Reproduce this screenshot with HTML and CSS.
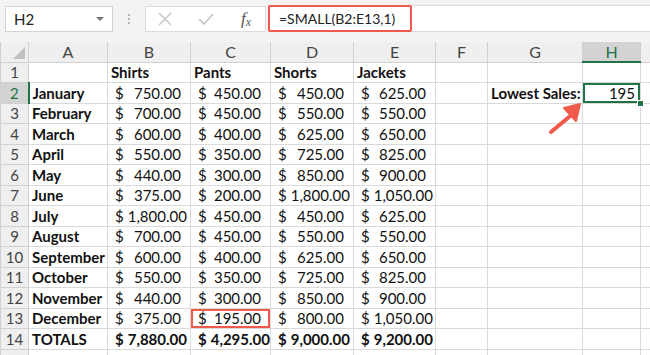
FILE: index.html
```html
<!DOCTYPE html>
<html>
<head>
    <title>SMALL function</title>
    <link rel="stylesheet" href="styles.css">
</head>
<body>
<div class="toolbar">
    <div class="namebox">
        <span>H2</span>
        <span class="caret"></span>
    </div>
    <div class="grip"><i></i><i></i><i></i></div>
    <div class="funcs">
        <svg width="14" height="14" viewBox="0 0 14 14"><path d="M1 1 L13 13 M13 1 L1 13" stroke="#c8c8c8" stroke-width="1.6" fill="none"/></svg>
        <svg width="16" height="14" viewBox="0 0 16 14"><path d="M1 7 L6 12 L15 2" stroke="#c8c8c8" stroke-width="1.8" fill="none"/></svg>
        <span class="fx">f<sub>x</sub></span>
    </div>
    <div class="formula">
        <span class="hl">=SMALL(B2:E13,1)</span>
    </div>
</div>
<div class="sheet">
    <table>
        <colgroup>
            <col style="width:28px"><col style="width:79px"><col style="width:83px"><col style="width:80px">
            <col style="width:83px"><col style="width:82px"><col style="width:52px"><col style="width:95px">
            <col style="width:58px"><col style="width:10px">
        </colgroup>
        <tr class="head">
            <th class="corner"><span class="tri"></span></th>
            <th>A</th><th>B</th><th>C</th><th>D</th><th>E</th><th>F</th><th>G</th><th class="sel">H</th><th></th>
        </tr>
        <tr>
            <th>1</th><td></td>
            <td class="b">Shirts</td><td class="b">Pants</td><td class="b">Shorts</td><td class="b">Jackets</td>
            <td></td><td></td><td></td><td></td>
        </tr>
        <tr>
            <th class="sel">2</th><td class="b">January</td>
            <td><div class="acc"><span>$</span><span>750.00</span></div></td>
            <td><div class="acc"><span>$</span><span>450.00</span></div></td>
            <td><div class="acc"><span>$</span><span>450.00</span></div></td>
            <td><div class="acc"><span>$</span><span>625.00</span></div></td>
            <td></td><td class="b r">Lowest Sales:</td><td class="active">195<span class="handle"></span></td><td></td>
        </tr>
        <tr>
            <th>3</th><td class="b">February</td>
            <td><div class="acc"><span>$</span><span>700.00</span></div></td>
            <td><div class="acc"><span>$</span><span>450.00</span></div></td>
            <td><div class="acc"><span>$</span><span>550.00</span></div></td>
            <td><div class="acc"><span>$</span><span>550.00</span></div></td>
            <td></td><td></td><td></td><td></td>
        </tr>
        <tr>
            <th>4</th><td class="b">March</td>
            <td><div class="acc"><span>$</span><span>600.00</span></div></td>
            <td><div class="acc"><span>$</span><span>400.00</span></div></td>
            <td><div class="acc"><span>$</span><span>625.00</span></div></td>
            <td><div class="acc"><span>$</span><span>650.00</span></div></td>
            <td></td><td></td><td></td><td></td>
        </tr>
        <tr>
            <th>5</th><td class="b">April</td>
            <td><div class="acc"><span>$</span><span>550.00</span></div></td>
            <td><div class="acc"><span>$</span><span>350.00</span></div></td>
            <td><div class="acc"><span>$</span><span>725.00</span></div></td>
            <td><div class="acc"><span>$</span><span>825.00</span></div></td>
            <td></td><td></td><td></td><td></td>
        </tr>
        <tr>
            <th>6</th><td class="b">May</td>
            <td><div class="acc"><span>$</span><span>440.00</span></div></td>
            <td><div class="acc"><span>$</span><span>300.00</span></div></td>
            <td><div class="acc"><span>$</span><span>850.00</span></div></td>
            <td><div class="acc"><span>$</span><span>900.00</span></div></td>
            <td></td><td></td><td></td><td></td>
        </tr>
        <tr>
            <th>7</th><td class="b">June</td>
            <td><div class="acc"><span>$</span><span>375.00</span></div></td>
            <td><div class="acc"><span>$</span><span>200.00</span></div></td>
            <td><div class="acc"><span>$</span><span>1,800.00</span></div></td>
            <td><div class="acc"><span>$</span><span>1,050.00</span></div></td>
            <td></td><td></td><td></td><td></td>
        </tr>
        <tr>
            <th>8</th><td class="b">July</td>
            <td><div class="acc"><span>$</span><span>1,800.00</span></div></td>
            <td><div class="acc"><span>$</span><span>450.00</span></div></td>
            <td><div class="acc"><span>$</span><span>450.00</span></div></td>
            <td><div class="acc"><span>$</span><span>625.00</span></div></td>
            <td></td><td></td><td></td><td></td>
        </tr>
        <tr>
            <th>9</th><td class="b">August</td>
            <td><div class="acc"><span>$</span><span>700.00</span></div></td>
            <td><div class="acc"><span>$</span><span>450.00</span></div></td>
            <td><div class="acc"><span>$</span><span>550.00</span></div></td>
            <td><div class="acc"><span>$</span><span>550.00</span></div></td>
            <td></td><td></td><td></td><td></td>
        </tr>
        <tr>
            <th>10</th><td class="b">September</td>
            <td><div class="acc"><span>$</span><span>600.00</span></div></td>
            <td><div class="acc"><span>$</span><span>400.00</span></div></td>
            <td><div class="acc"><span>$</span><span>625.00</span></div></td>
            <td><div class="acc"><span>$</span><span>650.00</span></div></td>
            <td></td><td></td><td></td><td></td>
        </tr>
        <tr>
            <th>11</th><td class="b">October</td>
            <td><div class="acc"><span>$</span><span>550.00</span></div></td>
            <td><div class="acc"><span>$</span><span>350.00</span></div></td>
            <td><div class="acc"><span>$</span><span>725.00</span></div></td>
            <td><div class="acc"><span>$</span><span>825.00</span></div></td>
            <td></td><td></td><td></td><td></td>
        </tr>
        <tr>
            <th>12</th><td class="b">November</td>
            <td><div class="acc"><span>$</span><span>440.00</span></div></td>
            <td><div class="acc"><span>$</span><span>300.00</span></div></td>
            <td><div class="acc"><span>$</span><span>850.00</span></div></td>
            <td><div class="acc"><span>$</span><span>900.00</span></div></td>
            <td></td><td></td><td></td><td></td>
        </tr>
        <tr>
            <th>13</th><td class="b">December</td>
            <td><div class="acc"><span>$</span><span>375.00</span></div></td>
            <td class="mark"><div class="acc"><span>$</span><span>195.00</span></div></td>
            <td><div class="acc"><span>$</span><span>800.00</span></div></td>
            <td><div class="acc"><span>$</span><span>1,050.00</span></div></td>
            <td></td><td></td><td></td><td></td>
        </tr>
        <tr>
            <th>14</th><td class="b">TOTALS</td>
            <td class="b"><div class="acc"><span>$</span><span>7,880.00</span></div></td>
            <td class="b"><div class="acc"><span>$</span><span>4,295.00</span></div></td>
            <td class="b"><div class="acc"><span>$</span><span>9,000.00</span></div></td>
            <td class="b"><div class="acc"><span>$</span><span>9,200.00</span></div></td>
            <td></td><td></td><td></td><td></td>
        </tr>
        <tr>
            <th></th><td></td><td></td><td></td><td></td><td></td><td></td><td></td><td></td><td></td>
        </tr>
    </table>
    <svg class="arrow" width="40" height="34" viewBox="0 0 40 34">
        <path d="M4 30 L28 10" stroke="#f05a4b" stroke-width="4" stroke-linecap="round" fill="none"/>
        <path d="M33 2 L17 6 L29 19 Z" fill="#f05a4b" stroke="#f05a4b" stroke-width="2" stroke-linejoin="round"/>
    </svg>
</div>
</body>
</html>
```

FILE: styles.css
```css
html, body {
    margin:0;
    padding:0;
    background:#ffffff;
    overflow:hidden;
    font-family: "Lato", "Noto Sans", sans-serif;
}

.toolbar {
    height:42px;
    background:#f3f3f3;
    display:flex;
    align-items:flex-start;
    padding-top:6px;
    box-sizing:border-box;
}

.namebox {
    margin-left:5px;
    width:108px;
    height:26px;
    box-sizing:border-box;
    background:#ffffff;
    border:1px solid #d4d4d4;
    display:flex;
    align-items:center;
    justify-content:space-between;
    padding:0 8px 0 8px;
    font-size:15px;
    color:#222;
}

.caret {
    width:0;
    height:0;
    border-left:4px solid transparent;
    border-right:4px solid transparent;
    border-top:4px solid #777;
}

.grip {
    width:32px;
    height:26px;
    display:flex;
    flex-direction:column;
    align-items:center;
    justify-content:center;
    gap:2px;
}

.grip i {
    width:2px;
    height:2px;
    background:#b5b5b5;
}

.funcs {
    width:121px;
    height:26px;
    box-sizing:border-box;
    background:#ffffff;
    border:1px solid #dcdcdc;
    display:flex;
    align-items:center;
    justify-content:space-between;
    padding:0 14px 0 12px;
}

.fx {
    font-family: "Liberation Serif", serif;
    font-style:italic;
    font-size:17px;
    color:#555;
}

.fx sub {
    font-size:12px;
    vertical-align:-2px;
}

.formula {
    flex:1;
    margin-left:2px;
    height:27px;
    margin-top:-1px;
    box-sizing:border-box;
    background:#ffffff;
    border-top:1px solid #dcdcdc;
    border-bottom:1px solid #dcdcdc;
    display:flex;
}

.formula .hl {
    border:2px solid #f05a4b;
    border-radius:2px;
    margin:-1px 0;
    width:144px;
    box-sizing:border-box;
    padding-left:9px;
    font-size:14px;
    line-height:24px;
    color:#222;
}

.sheet {
    position:relative;
}

table {
    border-collapse:collapse;
    table-layout:fixed;
    width:650px;
    font-size:15px;
    color:#111;
}

tr {
    height:20.5px;
}

tr.head {
    height:20px;
}

th, td {
    border:1px solid #d9d9d9;
    padding:0 3px;
    white-space:nowrap;
    overflow:visible;
    line-height:18px;
}

th {
    background:#efefef;
    font-weight:normal;
    color:#444;
    text-align:center;
    border-color:#d0d0d0;
    padding:0;
}

tr.head th {
    border-top:none;
    font-size:16px;
}

th.sel {
    background:#d3d3d3;
    color:#217346;
}

tr.head th.sel {
    border-bottom:2px solid #217346;
}

tr th.sel:first-child {
    border-right:2px solid #217346;
}

th.corner {
    position:relative;
}

.tri {
    position:absolute;
    right:3px;
    bottom:3px;
    width:0;
    height:0;
    border-left:12px solid transparent;
    border-bottom:12px solid #c0c0c0;
}

td.b {
    font-weight:bold;
}

td.r {
    text-align:right;
    padding-right:6px;
}

.acc {
    display:flex;
    justify-content:space-between;
    gap:4px;
    padding:0 6px 0 4px;
}

td.active {
    position:relative;
    text-align:right;
    box-shadow:inset 0 0 0 2px #217346;
    padding-right:5px;
}

.handle {
    position:absolute;
    right:-4px;
    bottom:-4px;
    width:5px;
    height:5px;
    background:#217346;
    border:1px solid #ffffff;
}

td.mark {
    box-shadow:inset 0 0 0 2px #f05a4b;
}

.arrow {
    position:absolute;
    left:547px;
    top:60px;
}
```
